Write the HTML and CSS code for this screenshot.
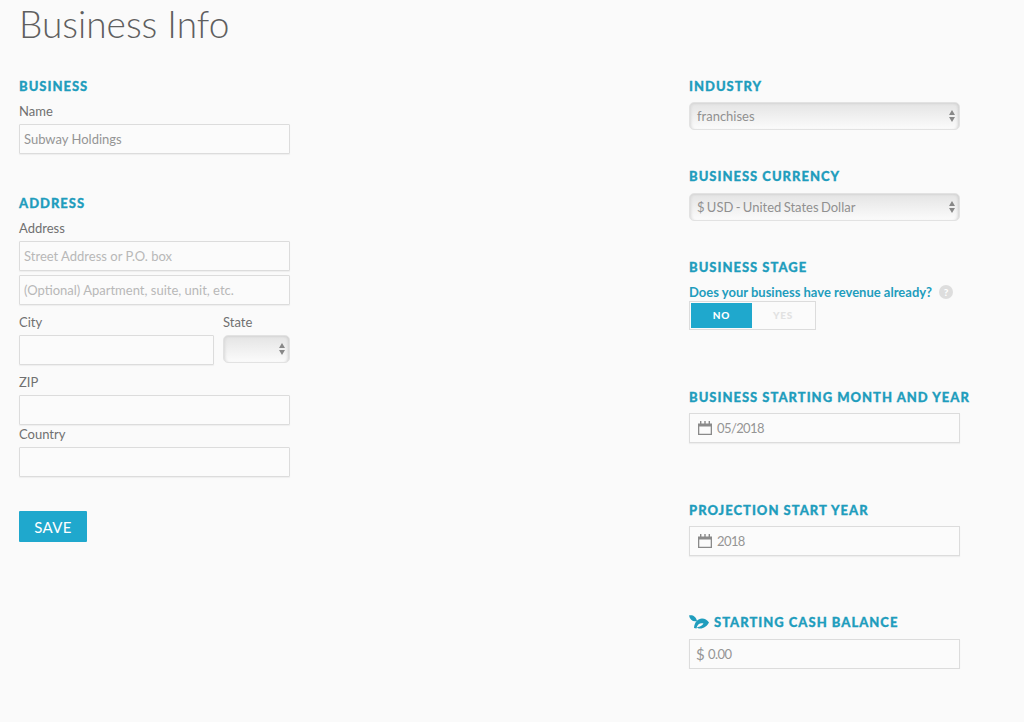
FILE: index.html
```html
<!DOCTYPE html>
<html lang="en">
<head>
    <meta charset="UTF-8">
    <title>Business Info</title>
    <link rel="stylesheet" href="styles.css">
</head>
<body>
    <h1>Business Info</h1>
    <div class="columns">
        <div class="col col-left">
            <h2>Business</h2>
            <label class="field-label">Name</label>
            <input class="text-input" type="text" value="Subway Holdings">

            <h2 class="address-title">Address</h2>
            <label class="field-label">Address</label>
            <input class="text-input" type="text" placeholder="Street Address or P.O. box">
            <input class="text-input second-line" type="text" placeholder="(Optional) Apartment, suite, unit, etc.">

            <div class="city-row">
                <div class="city">
                    <label class="field-label">City</label>
                    <input class="text-input" type="text">
                </div>
                <div class="state">
                    <label class="field-label">State</label>
                    <div class="select-box"></div>
                </div>
            </div>

            <label class="field-label zip-label">ZIP</label>
            <input class="text-input" type="text">
            <label class="field-label country-label">Country</label>
            <input class="text-input" type="text">

            <button class="save-btn" type="button">SAVE</button>
        </div>

        <div class="col col-right">
            <h2>Industry</h2>
            <div class="select-box">franchises</div>

            <h2 class="currency-title">Business Currency</h2>
            <div class="select-box currency-select">$ USD - United States Dollar</div>

            <h2 class="stage-title">Business Stage</h2>
            <div class="question">
                Does your business have revenue already?
                <span class="help">?</span>
            </div>
            <div class="toggle">
                <span class="toggle-no">NO</span>
                <span class="toggle-yes">YES</span>
            </div>

            <h2 class="month-title">Business Starting Month and Year</h2>
            <div class="icon-input">
                <svg class="cal" width="14" height="14" viewBox="0 0 14 14">
                    <path d="M0 2.500h14V14H0z M1.300 5.500v7.200h11.400V5.500z" fill="#8a8a8a" fill-rule="evenodd"/>
                    <path d="M2 0h1.400v3.500H2z M6.300 0h1.400v3.500H6.300z M10.600 0h1.400v3.500h-1.400z" fill="#8a8a8a"/>
                </svg>
                05/2018
            </div>

            <h2 class="year-title">Projection Start Year</h2>
            <div class="icon-input">
                <svg class="cal" width="14" height="14" viewBox="0 0 14 14">
                    <path d="M0 2.500h14V14H0z M1.300 5.500v7.200h11.400V5.500z" fill="#8a8a8a" fill-rule="evenodd"/>
                    <path d="M2 0h1.400v3.500H2z M6.300 0h1.400v3.500H6.300z M10.600 0h1.400v3.500h-1.400z" fill="#8a8a8a"/>
                </svg>
                2018
            </div>

            <h2 class="cash-title">
                <svg class="sprout" width="20" height="14" viewBox="0 0 20 14">
                    <path d="M0 .5C3-.5 7 1 8 6 4 7 1 5 0 .5z" fill="#1f9dbd"/>
                    <path d="M5 13C5.500 7 9 3.500 13 3.500c3 0 5 1.500 7 4-2 3.500-5 6-9 6-1.500 0-2.500-.5-3-1.500 2 .5 5-1 6.500-3.500-3-1-6.500.5-7 5z" fill="#1f9dbd"/>
                </svg>
                Starting Cash Balance
            </h2>
            <div class="icon-input cash-input"><span class="dollar">$</span> 0.00</div>
        </div>
    </div>
</body>
</html>
```

FILE: styles.css
```css
body {
    margin: 0;
    padding: 0 19px;
    background-color: #fafafa;
    font-family: "Lato", "Open Sans", sans-serif;
    color: #666;
}
h1 {
    margin: 0;
    height: 77px;
    font-size: 37px;
    font-weight: 300;
    line-height: 48px;
    color: #5f5f5f;
}
h2 {
    margin: 0;
    height: 18px;
    font-size: 13px;
    line-height: 18px;
    font-weight: 900;
    letter-spacing: 1px;
    text-transform: uppercase;
    white-space: nowrap;
    color: #1f9dbd;
    -webkit-text-stroke: 0.3px #1f9dbd;
}
.columns {
    display: flex;
    justify-content: space-between;
    width: 941px;
}
.col {
    width: 271px;
}
.field-label {
    display: block;
    height: 23px;
    margin-top: 6px;
    font-size: 13px;
    line-height: 20px;
    color: #707070;
}
.text-input {
    display: block;
    box-sizing: border-box;
    width: 100%;
    height: 30px;
    margin: 0;
    padding: 0 4px;
    background: #fbfbfb;
    border: 1px solid #dcdcdc;
    border-radius: 1px;
    box-shadow: 0 1px 1px #eee;
    font-family: inherit;
    font-size: 13px;
    color: #959595;
    outline: none;
}
.text-input::placeholder {
    color: #b8b8b8;
}
.second-line {
    margin-top: 4px;
}
.address-title {
    margin-top: 40px;
}
.city-row {
    display: flex;
    justify-content: space-between;
    margin-top: 1px;
}
.city {
    width: 195px;
}
.state {
    width: 67px;
}
.zip-label {
    margin-top: 7px;
}
.country-label {
    margin-top: -1px;
}
.select-box {
    position: relative;
    box-sizing: border-box;
    height: 28px;
    padding: 0 7px;
    border: 1px solid #e2e2e2;
    border-radius: 5px;
    background: linear-gradient(#e4e4e4, #f1f1f1 55%, #fbfbfb);
    box-shadow: inset 3px 0 3px -2px #d8d8d8, inset -3px 0 3px -2px #cfcfcf, inset 0 2px 2px -1px #d6d6d6;
    font-size: 13px;
    line-height: 26px;
    word-spacing: -1px;
    color: #909090;
}
.select-box::before,
.select-box::after {
    content: '';
    position: absolute;
    right: 4px;
    border-left: 3.500px solid transparent;
    border-right: 3.500px solid transparent;
}
.select-box::before {
    top: 7px;
    border-bottom: 5px solid #888;
}
.select-box::after {
    top: 14px;
    border-top: 5px solid #888;
}
.col-right > .select-box {
    margin-top: 7px;
}
.col-right > .currency-select {
    margin-top: 8px;
}
.save-btn {
    display: block;
    width: 68px;
    height: 31px;
    margin-top: 34px;
    padding: 0;
    border: none;
    border-radius: 1px;
    background-color: #1fa8cd;
    color: #fff;
    font-family: inherit;
    font-size: 15px;
    letter-spacing: 0.3px;
}
.currency-title {
    margin-top: 37px;
}
.stage-title {
    margin-top: 37px;
}
.question {
    display: flex;
    align-items: center;
    gap: 7px;
    height: 20px;
    margin-top: 6px;
    font-size: 13px;
    font-weight: 700;
    white-space: nowrap;
    color: #1f9dbd;
}
.help {
    width: 14px;
    height: 14px;
    border-radius: 50%;
    background-color: #ddd;
    color: #fff;
    font-size: 10px;
    font-weight: 900;
    line-height: 14px;
    text-align: center;
}
.toggle {
    display: flex;
    box-sizing: border-box;
    width: 127px;
    height: 29px;
    margin-top: -1px;
    padding: 1px;
    background: #fbfbfb;
    border: 1px solid #dcdcdc;
    font-size: 10px;
    font-weight: 900;
    letter-spacing: 0.8px;
    line-height: 25px;
    text-align: center;
}
.toggle-no {
    width: 61px;
    background-color: #1fa8cd;
    color: #fff;
}
.toggle-yes {
    flex: 1;
    color: #e2e2e2;
}
.month-title {
    margin-top: 58px;
}
.icon-input {
    display: flex;
    align-items: center;
    gap: 5px;
    box-sizing: border-box;
    height: 30px;
    margin-top: 7px;
    padding: 0 8px;
    background: #fbfbfb;
    border: 1px solid #dcdcdc;
    box-shadow: 0 1px 1px #eee;
    font-size: 13px;
    letter-spacing: -0.6px;
    color: #959595;
}
.cal {
    flex: none;
}
.year-title {
    margin-top: 58px;
}
.cash-title {
    display: flex;
    align-items: center;
    gap: 5px;
    margin-top: 57px;
}
.sprout {
    flex: none;
}
.cash-input {
    gap: 4px;
    margin-top: 8px;
    padding: 0 6px;
}
.dollar {
    font-size: 15px;
}
```
